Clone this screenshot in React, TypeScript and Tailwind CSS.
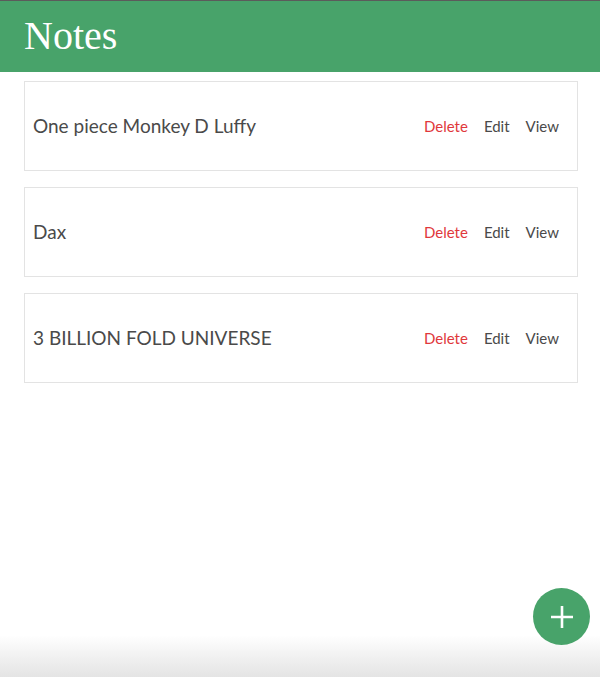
import React from "react";

const notes = ["One piece Monkey D Luffy", "Dax", "3 BILLION FOLD UNIVERSE"];

export default function App() {
  return (
    <div className="relative h-[677px] w-[600px] overflow-hidden bg-white" style={{ fontFamily: "Lato, 'Noto Sans', sans-serif" }}>
      <div className="h-px bg-[#5b5b5b]" />
      <header className="flex h-[71px] items-center bg-[#48a36a] px-6">
        <h1 className="text-[40px] leading-none text-white pb-[2px]" style={{ fontFamily: "'Liberation Serif', serif" }}>Notes</h1>
      </header>
      <div className="ml-6 flex w-[554px] flex-col gap-4 pt-[9px]">
        {notes.map((n) => (
          <div key={n} className="flex h-[90px] items-center justify-between border border-[#e3e3e3] pl-2 pr-[18px]">
            <span className="text-[19px] text-[#4a4a4a]">{n}</span>
            <div className="flex gap-4 text-[15px]">
              <span className="text-[#e0383b]">Delete</span>
              <span className="text-[#4a4a4a]">Edit</span>
              <span className="text-[#4a4a4a]">View</span>
            </div>
          </div>
        ))}
      </div>
      <div className="pointer-events-none absolute bottom-0 left-0 h-[42px] w-full bg-gradient-to-b from-white to-[#e4e4e4]" />
      <button className="absolute left-[533px] top-[588px] flex h-[57px] w-[57px] items-center justify-center rounded-full bg-[#48a36a]">
        <svg width="22" height="22" viewBox="0 0 22 22"><path d="M11 0v22M0 11h22" stroke="white" strokeWidth="2.6" /></svg>
      </button>
    </div>
  );
}
